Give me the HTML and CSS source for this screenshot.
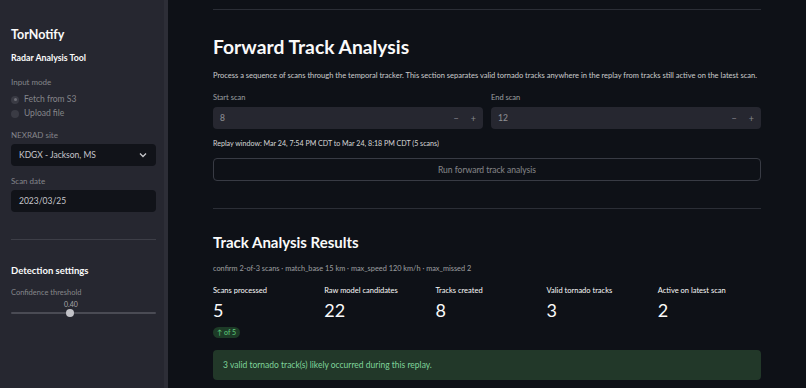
FILE: index.html
```html
<!DOCTYPE html>
<html>
<head>
<meta charset="utf-8">
<link rel="stylesheet" href="styles.css">
</head>
<body>
<aside class="sidebar">
  <div class="brand">TorNotify</div>
  <div class="subbrand">Radar Analysis Tool</div>
  <div class="label sb-label first">Input mode</div>
  <div class="radio-group">
    <div class="radio"><span class="dot checked"></span>Fetch from S3</div>
    <div class="radio"><span class="dot"></span>Upload file</div>
  </div>
  <div class="label sb-label">NEXRAD site</div>
  <div class="sb-input select">
    <span>KDGX - Jackson, MS</span>
    <svg class="chev" width="8" height="6" viewBox="0 0 8 6"><path d="M1 1.5 L4 4.5 L7 1.5" fill="none" stroke="#c8c8cc" stroke-width="1.3"/></svg>
  </div>
  <div class="label sb-label date">Scan date</div>
  <div class="sb-input">2023/03/25</div>
  <div class="sb-divider"></div>
  <div class="sb-heading">Detection settings</div>
  <div class="label sb-label small">Confidence threshold</div>
  <div class="slider">
    <div class="slider-value">0.40</div>
    <div class="track"><span class="thumb"></span></div>
  </div>
</aside>
<main class="main">
  <div class="divider top"></div>
  <h1 class="title">Forward Track Analysis</h1>
  <p class="desc">Process a sequence of scans through the temporal tracker. This section separates valid tornado tracks anywhere in the replay from tracks still active on the latest scan.</p>
  <div class="inputs">
    <div class="field">
      <div class="label">Start scan</div>
      <div class="num-input"><span>8</span><span class="steps"><span>−</span><span>+</span></span></div>
    </div>
    <div class="field">
      <div class="label">End scan</div>
      <div class="num-input"><span>12</span><span class="steps"><span>−</span><span>+</span></span></div>
    </div>
  </div>
  <div class="replay">Replay window: Mar 24, 7:54 PM CDT to Mar 24, 8:18 PM CDT (5 scans)</div>
  <div class="button">Run forward track analysis</div>
  <div class="divider mid"></div>
  <h2 class="subtitle">Track Analysis Results</h2>
  <div class="caption">confirm 2-of-3 scans · match_base 15 km · max_speed 120 km/h · max_missed 2</div>
  <div class="metrics">
    <div class="metric"><div class="m-label">Scans processed</div><div class="m-value">5</div><span class="delta">↑ of 5</span></div>
    <div class="metric"><div class="m-label">Raw model candidates</div><div class="m-value">22</div></div>
    <div class="metric"><div class="m-label">Tracks created</div><div class="m-value">8</div></div>
    <div class="metric"><div class="m-label">Valid tornado tracks</div><div class="m-value">3</div></div>
    <div class="metric"><div class="m-label">Active on latest scan</div><div class="m-value">2</div></div>
  </div>
  <div class="alert">3 valid tornado track(s) likely occurred during this replay.</div>
</main>
</body>
</html>
```
FILE: styles.css
```css
* { box-sizing: border-box; }
html, body { margin: 0; padding: 0; }
body {
  width: 806px;
  height: 388px;
  overflow: hidden;
  display: flex;
  background: #0e1117;
  color: #fafafa;
  font-family: Lato, "Noto Sans", "Liberation Sans", sans-serif;
}
.sidebar {
  width: 168px;
  flex: 0 0 168px;
  height: 388px;
  background: #262730;
  padding: 0 8px 0 11px;
  border-right: 4px solid #2d2e37;
  display: flex;
  flex-direction: column;
}
.brand {
  margin-top: 27px;
  font-size: 12.5px;
  font-weight: 700;
  line-height: 16px;
}
.subbrand {
  margin-top: 9px;
  font-size: 8.8px;
  font-weight: 700;
  line-height: 12px;
}
.label {
  font-size: 8px;
  line-height: 10px;
  color: rgba(250, 250, 250, 0.6);
}
.sb-label { margin-top: 11px; color: rgba(250, 250, 250, 0.45); }
.sb-label.first { margin-top: 13px; }
.sb-label.date { margin-top: 10px; }
.radio-group { display: flex; flex-direction: column; gap: 3px; margin-top: 7px; }
.radio {
  display: flex;
  align-items: center;
  gap: 5px;
  font-size: 8.5px;
  line-height: 11px;
  color: rgba(250, 250, 250, 0.45);
}
.dot {
  width: 8px; height: 8px;
  border-radius: 50%;
  background: #3a3b44;
  display: inline-block;
  position: relative;
}
.dot.checked::after {
  content: "";
  position: absolute;
  left: 2.5px; top: 2.5px;
  width: 3px; height: 3px;
  border-radius: 50%;
  background: #6c6d75;
}
.sb-input {
  margin-top: 4px;
  height: 22px;
  border-radius: 4px;
  background: #111319;
  padding: 0 8px;
  display: flex;
  align-items: center;
  justify-content: space-between;
  font-size: 8.5px;
  color: #c6c6cc;
}
.chev { margin-right: 1px; }
.sb-divider {
  margin-top: 27px;
  height: 1px;
  background: #3d3e47;
}
.sb-heading {
  margin-top: 24px;
  font-size: 9.5px;
  font-weight: 700;
  line-height: 14px;
}
.sb-label.small { margin-top: 10px; font-size: 7.5px; }
.slider { position: relative; margin-top: 2px; }
.slider-value {
  font-size: 7px;
  line-height: 9px;
  color: rgba(250, 250, 250, 0.6);
  margin-left: 53px;
}
.track {
  margin-top: 3px;
  height: 2px;
  border-radius: 1px;
  background: #4a4b54;
  position: relative;
}
.thumb {
  position: absolute;
  left: 55px; top: -3px;
  width: 8px; height: 8px;
  border-radius: 50%;
  background: #c2c2c8;
}
.main {
  flex: 1;
  padding: 0 45px;
  display: flex;
  flex-direction: column;
}
.divider { height: 1px; background: #2b2e36; }
.divider.top { margin-top: 9px; }
.title {
  margin: 25px 0 0;
  font-size: 19.3px;
  font-weight: 700;
  line-height: 24px;
}
.desc {
  margin: 12px 0 0;
  font-size: 7.5px;
  line-height: 10px;
  color: rgba(250, 250, 250, 0.8);
  white-space: nowrap;
}
.inputs {
  display: grid;
  grid-template-columns: 1fr 1fr;
  gap: 8px;
  margin-top: 12px;
}
.field .label { color: rgba(250, 250, 250, 0.6); font-size: 7.5px; }
.num-input {
  margin-top: 4px;
  height: 22px;
  border-radius: 4px;
  background: #262730;
  display: flex;
  align-items: center;
  justify-content: space-between;
  padding: 0 7px;
  font-size: 8.5px;
  color: rgba(250, 250, 250, 0.5);
}
.steps { display: flex; gap: 12px; font-size: 9px; color: rgba(250, 250, 250, 0.45); }
.replay {
  margin-top: 10px;
  font-size: 7.1px;
  line-height: 10px;
  color: rgba(250, 250, 250, 0.85);
}
.button {
  margin-top: 9px;
  height: 23px;
  border: 1px solid #383b44;
  border-radius: 4px;
  display: flex;
  align-items: center;
  justify-content: center;
  font-size: 8.5px;
  color: rgba(250, 250, 250, 0.5);
}
.divider.mid { margin-top: 27px; }
.subtitle {
  margin: 23px 0 0;
  font-size: 15px;
  font-weight: 700;
  line-height: 20px;
}
.caption {
  margin-top: 12px;
  font-size: 7.35px;
  line-height: 10px;
  color: rgba(250, 250, 250, 0.6);
}
.metrics {
  display: grid;
  grid-template-columns: repeat(5, 1fr);
  gap: 8px;
  margin-top: 12px;
}
.metric { display: flex; flex-direction: column; align-items: flex-start; }
.m-label { font-size: 7.5px; line-height: 10px; color: #fafafa; }
.m-value { font-size: 18px; line-height: 22px; margin-top: 3px; }
.delta {
  margin-top: 6px;
  font-size: 7px;
  line-height: 11px;
  padding: 0 4px;
  border-radius: 6px;
  background: #1d3b27;
  color: #5fcf7f;
}
.alert {
  margin-top: 12px;
  height: 30px;
  border-radius: 4px;
  background: #223829;
  color: #7fd49a;
  font-size: 8.5px;
  display: flex;
  align-items: center;
  padding: 0 10px;
}
```
